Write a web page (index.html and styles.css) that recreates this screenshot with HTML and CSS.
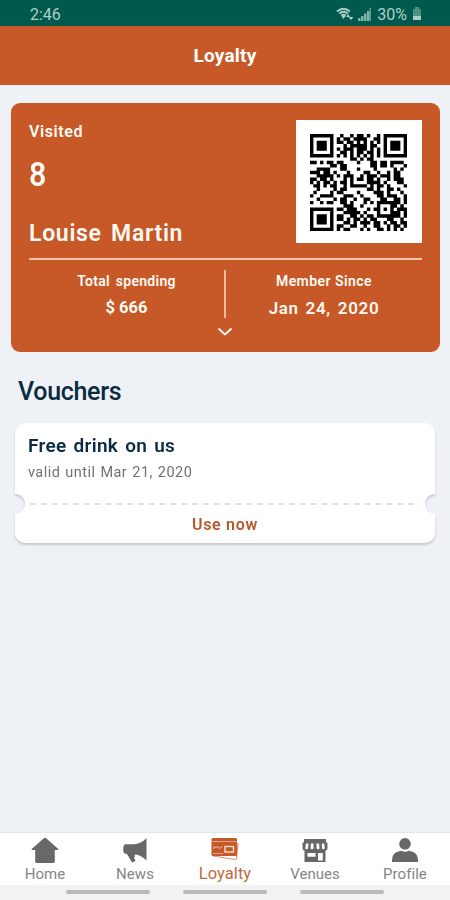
FILE: index.html
```
<!DOCTYPE html>
<html lang="en">
<head>
    <meta charset="UTF-8">
    <meta name="viewport" content="width=device-width, initial-scale=1.0">
    <title>Loyalty</title>
    <link rel="stylesheet" href="styles.css">
</head>
<body>
    <div class="status-bar">
        <span class="time">2:46</span>
        <div class="status-icons">
            <svg class="wifi" width="18" height="14" viewBox="0 0 18 14">
                <path d="M1 4.500Q7.500-1 14 4.500M3.200 6.500Q7.500 3 12 6.500M5.300 8.500Q7.500 7 9.700 8.500" fill="none" stroke="currentColor" stroke-width="1.800"/>
                <path d="M5.500 9h4l-2 3zM10 10l2-3 2 3zM12.500 10h5l-2.500 3z" fill="currentColor"/>
            </svg>
            <svg class="signal" width="14" height="13" viewBox="0 0 14 13" fill="currentColor">
                <path d="M0 10h2.500v3H0zM3 8h2.500v5H3zM6 5.500h2.500V13H6zM9 3h2.500v10H9z" opacity=".75"/>
                <path d="M11.500 0h1.500v13h-1.500z" opacity=".55"/>
            </svg>
            <span class="percent">30%</span>
            <svg class="battery" width="10" height="14" viewBox="0 0 10 14" fill="currentColor">
                <path d="M3 0h4v2h2v7H1V2h2z" opacity=".45"/>
                <path d="M1 9h8v4H1z"/>
            </svg>
        </div>
    </div>

    <header class="header">
        <h1>Loyalty</h1>
    </header>

    <main class="content">
        <section class="card">
            <div class="card-top">
                <div class="member">
                    <p class="visited">Visited</p>
                    <p class="count">8</p>
                    <p class="name">Louise Martin</p>
                </div>
                <div class="qr">
                    <svg id="qrCode" width="97" height="97" viewBox="0 0 29 29"></svg>
                </div>
            </div>
            <div class="stats">
                <div class="stat">
                    <p class="label spending">Total spending</p>
                    <p class="value amount">$ 666</p>
                </div>
                <div class="stat">
                    <p class="label">Member Since</p>
                    <p class="value date">Jan 24, 2020</p>
                </div>
            </div>
            <svg class="chevron" width="16" height="10" viewBox="0 0 16 10">
                <path d="M1.500 1.500L8 7.500l6.500-6" fill="none" stroke="currentColor" stroke-width="2"/>
            </svg>
        </section>

        <h2>Vouchers</h2>

        <section class="voucher">
            <div class="voucher-info">
                <h3>Free drink on us</h3>
                <p>valid until Mar 21, 2020</p>
            </div>
            <div class="tear">
                <svg width="390" height="2" viewBox="0 0 390 2">
                    <path d="M0 1h390" stroke="#dcd8d6" stroke-width="1.600" stroke-dasharray="6 4.800"/>
                </svg>
            </div>
            <a class="use" href="#">Use now</a>
        </section>
    </main>

    <nav class="tabs">
        <a class="tab" href="#">
            <svg width="28" height="27" viewBox="0 0 28 27" fill="currentColor">
                <path d="M14 .8q.8 0 1.500.7L27.300 12q.5 1-.6 1h-2.900v11.500q0 1.500-1.500 1.500H5.700q-1.500 0-1.500-1.500V13H1.300q-1.100 0-.6-1L12.500 1.500Q13.200.8 14 .8z"/>
            </svg>
            <span>Home</span>
        </a>
        <a class="tab" href="#">
            <svg width="28" height="27" viewBox="0 0 28 27" fill="currentColor">
                <path d="M25.500 1v22.500q-5-5-10.500-6l-1.500.500.500 1.500-1 1 1.500 3.500-3.500 1.500-5-8.500-2.500-.5Q2 15.500 2.200 11.500T4.500 7.300H13Q20 7 25.500 1z"/>
            </svg>
            <span>News</span>
        </a>
        <a class="tab active" href="#">
            <svg width="28" height="27" viewBox="0 0 28 27">
                <path d="M2 19l22 3.500q1.500 0 1.600-1.500L27 6" fill="none" stroke="#dc9273" stroke-width="1.200"/>
                <rect x=".5" y="1" width="25.500" height="18" rx="1.500" fill="#c65927"/>
                <path d="M1 4.500h24.500" stroke="#e2a285" stroke-width="1"/>
                <path d="M3 12V9l2 2 1.500-2 1 2H10l1-2" fill="none" stroke="#e8b498" stroke-width="1"/>
                <rect x="14" y="9.500" width="8.500" height="5.500" fill="none" stroke="#fbe6da" stroke-width="1.300"/>
                <path d="M2 16.500h10" stroke="#e2a285" stroke-width="1"/>
            </svg>
            <span>Loyalty</span>
        </a>
        <a class="tab" href="#">
            <svg width="28" height="27" viewBox="0 0 28 27">
                <path d="M3 2h22v3l1.500 1v5q0 2.500-2 2.500V25h-21V13.500q-2 0-2-2.500V6L3 5z" fill="currentColor"/>
                <path d="M5 6.500h2.500L7 11.500q-1.300 1.500-2.800 0zM10 6.500h2.500v5q-1.500 1.500-3 0zM15.500 6.500H18l.5 5q-1.500 1.500-3 0zM20.800 6.500h2.400l.6 5q-1.500 1.500-2.800 0zM6.500 16h8v3.800h-8zM17 16h4.800v7.500H17z" fill="#fff"/>
            </svg>
            <span>Venues</span>
        </a>
        <a class="tab" href="#">
            <svg width="28" height="27" viewBox="0 0 28 27" fill="currentColor">
                <circle cx="14" cy="6.800" r="5.800"/>
                <path d="M1 25v-2q0-8.500 9.500-9.300 3.500 2.300 7 0Q27 14.500 27 23v2z"/>
            </svg>
            <span>Profile</span>
        </a>
    </nav>
    <div class="system-bar">
        <i></i><i></i><i></i>
    </div>

    <script src="qr.js"></script>
</body>
</html>
```

FILE: styles.css
```
* {
    box-sizing: border-box;
}

body {
    margin: 0;
    height: 900px;
    display: flex;
    flex-direction: column;
    overflow: hidden;
    font-family: Roboto, 'Liberation Sans', sans-serif;
    background: #eef2f7;
}

h1, h2, h3, p {
    margin: 0;
}

svg {
    display: block;
}

a {
    text-decoration: none;
}

.status-bar {
    height: 26px;
    padding: 2px 28px 0 30px;
    display: flex;
    align-items: center;
    justify-content: space-between;
    background: #00594c;
    color: #acd0c8;
    font-size: 16px;
}

.status-icons {
    display: flex;
    align-items: center;
}

.signal {
    margin: 0 5px 0 4px;
}

.battery {
    margin-left: 5px;
}

.header {
    height: 59px;
    display: flex;
    align-items: center;
    justify-content: center;
    background: #c65927;
    color: #fff;
}

h1 {
    font-size: 19px;
    font-weight: 700;
    letter-spacing: 0.2px;
}

.content {
    flex: 1;
    padding: 18px 10px 0 11px;
}

.card {
    height: 249px;
    padding: 17px 18px 0;
    border-radius: 9px;
    background: #c65927;
    color: #fff9f3;
}

.card-top {
    display: flex;
    justify-content: space-between;
    height: 140px;
    border-bottom: 2px solid #f3c7aa;
}

.visited {
    margin-top: 2px;
    font-size: 16px;
    line-height: 19px;
    font-weight: 600;
    letter-spacing: 0.6px;
}

.count {
    margin-top: 13px;
    font-size: 33px;
    line-height: 42px;
    font-weight: 600;
    transform: scaleX(0.92);
    transform-origin: left;
}

.name {
    margin-top: 23px;
    font-size: 23px;
    line-height: 30px;
    font-weight: 600;
    letter-spacing: 0.7px;
    word-spacing: 3px;
}

.qr {
    width: 126px;
    height: 123px;
    padding: 14px 0 0 14px;
    background: #fff;
}

.stats {
    display: grid;
    grid-template-columns: 195px 1fr;
    height: 48px;
    margin-top: 10px;
    text-align: center;
    font-weight: 600;
}

.stat + .stat {
    border-left: 2px solid #efbd9e;
}

.label {
    margin-top: 2px;
    font-size: 14px;
    line-height: 18px;
    letter-spacing: 0.45px;
}

.spending {
    letter-spacing: 0.3px;
    word-spacing: 2px;
}

.value {
    margin-top: 8px;
    font-size: 17px;
    line-height: 20px;
}

.amount {
    font-weight: 700;
    font-size: 16.5px;
}

.date {
    letter-spacing: 0.65px;
    word-spacing: 2px;
}

.chevron {
    margin: 9px auto 0 188px;
}

h2 {
    margin: 24px 0 0 7px;
    font-size: 25px;
    line-height: 32px;
    font-weight: 500;
    letter-spacing: -0.3px;
    color: #0b2b40;
}

.voucher {
    height: 120px;
    margin: 15px 5px 0 4px;
    display: flex;
    flex-direction: column;
    filter: drop-shadow(0 2px 1px rgba(70, 80, 90, 0.25));
}

.voucher-info {
    height: 71px;
    padding: 10px 13px 0;
    background: #fff;
    border-radius: 10px 10px 0 0;
}

h3 {
    font-size: 19px;
    line-height: 26px;
    font-weight: 600;
    letter-spacing: 0.3px;
    word-spacing: 2px;
    color: #0b2b40;
}

.voucher-info p {
    margin-top: 3px;
    font-size: 14.5px;
    line-height: 21px;
    letter-spacing: 0.45px;
    word-spacing: 1px;
    color: #707070;
}

/* half-circle notches at both ends of the tear line */
.tear {
    height: 20px;
    display: flex;
    align-items: center;
    justify-content: center;
    background:
        radial-gradient(circle at 0 50%, transparent 9.5px, #fff 10.5px) left / 50% 100% no-repeat,
        radial-gradient(circle at 100% 50%, transparent 9.5px, #fff 10.5px) right / 50% 100% no-repeat;
}

.use {
    flex: 1;
    padding-top: 1px;
    background: #fff;
    border-radius: 0 0 10px 10px;
    text-align: center;
    font-size: 16px;
    line-height: 20px;
    font-weight: 600;
    letter-spacing: 0.7px;
    color: #b55a2b;
}

.tabs {
    height: 53px;
    display: grid;
    grid-template-columns: repeat(5, 1fr);
    border-top: 1px solid #e2e5e9;
    background: #fff;
}

.tab {
    padding-top: 4px;
    display: flex;
    flex-direction: column;
    align-items: center;
    color: #686868;
}

.tab span {
    font-size: 15px;
    line-height: 20px;
    letter-spacing: 0.05px;
    color: #858585;
}

.tab.active span {
    font-size: 16.5px;
    color: #c06a43;
}

.system-bar {
    height: 15px;
    padding-top: 5px;
    display: flex;
    justify-content: center;
    gap: 33px;
    background: #f2f2f2;
}

.system-bar i {
    width: 84px;
    height: 4px;
    border-radius: 2px;
    background: #bababa;
}
```

FILE: qr.js
```
const rows = [
    '#######..#..#.##.#..#.#######',
    '#.....#.#.##.####..##.#.....#',
    '#.###.#.##.##.#.#.#.#.#.###.#',
    '#.###.#...#.#####.##..#.###.#',
    '#.###.#.#.###.###.#.#.#.###.#',
    '#.....#..##.#.##.##.#.#.....#',
    '#######.#.#.#.#.#.#.#.#######',
    '............##.#.##..........',
    '##.#.##.##....#...##.##.####.',
    '......##.##.......##.##.#...#',
    '..####...##...#....#.....#.#.',
    '###.##.#...#....##..#..#.##..',
    '..#####.#.###..#.###.###.##..',
    '##.##.#...#.#.##.##.#..#.###.',
    '#.#.##.#.##.#....####.#...##.',
    '.##.#.##..#.#####.#.##.#....#',
    '..#....#.##......##.#..##.#..',
    '.#....#.##....#....###.#...#.',
    '#..####...###..#....##.###..#',
    '..#....#.##..#..##...##..##.#',
    '#..#.##..##.#...#.#.#######.#',
    '..........###..#....#...##.#.',
    '#######.##.###...#.##.#.#.###',
    '#.....#...#####.#...#...###.#',
    '#.###.#.##..##.#.##.#######.#',
    '#.###.#.##.#.##.#.##...##..#.',
    '#.###.#...##.#.###.##.#.##.##',
    '#.....#.##..##..#..##..#.##.#',
    '#######.#.##...#.#..##.#.#.#.'
];

let d = '';
rows.forEach((row, y) => {
    for (let x = 0; x < row.length; x++) {
        if (row[x] === '#') d += `M${x} ${y}h1.02v1.02h-1.02z`;
    }
});
document.getElementById('qrCode').innerHTML = `<path d="${d}" fill="#000"/>`;
```
